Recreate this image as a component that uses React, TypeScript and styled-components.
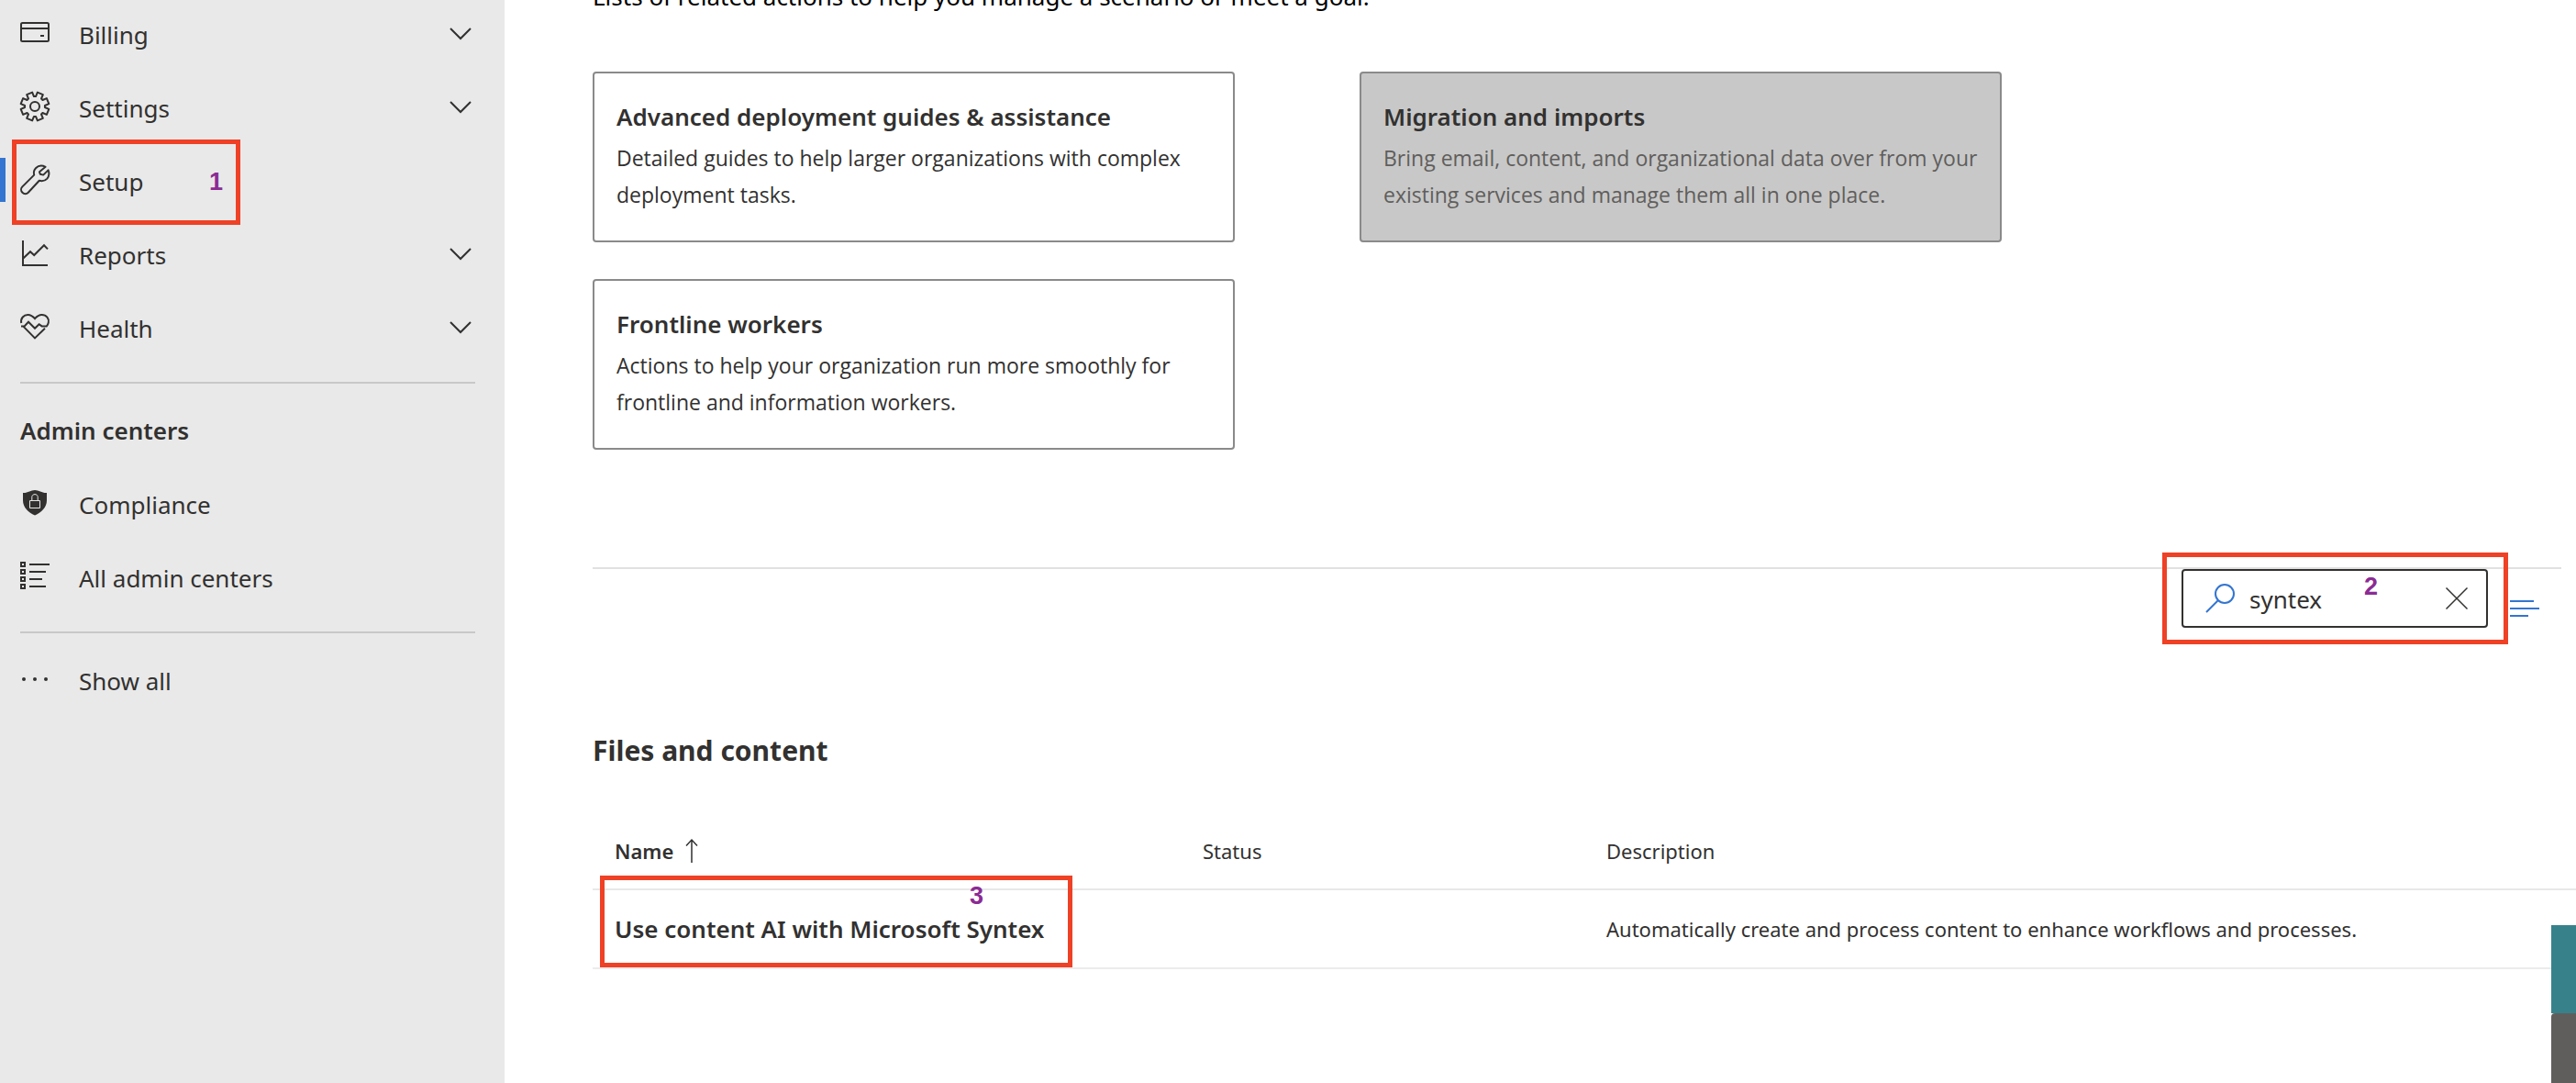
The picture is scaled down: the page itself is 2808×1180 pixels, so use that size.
import React, { useState } from "react";
import styled, { createGlobalStyle, css } from "styled-components";

const color = {
  text: "#323130",
  muted: "#605e5c",
  nav: "#e9e9e9",
  rule: "#c8c8c8",
  cardBorder: "#8a8a8a",
  lineSoft: "#e1e1e1",
  accent: "#3375d0",
  mark: "#ee4126",
  markText: "#8b2b94",
};

const GlobalStyle = createGlobalStyle`
  * { box-sizing: border-box; }
  html, body { margin: 0; }
  body {
    overflow: hidden;
    background: #ffffff;
    color: ${color.text};
    font-family: "Noto Sans", "Open Sans", sans-serif;
    font-size: 26px;
    line-height: 40px;
  }
  button, input { font: inherit; color: inherit; }
  h2, h3, p, ul { margin: 0; padding: 0; }
`;

const Shell = styled.div`
  display: flex;
  height: 100vh;
  overflow: hidden;
`;

const Sidebar = styled.nav`
  flex: 0 0 550px;
  background: ${color.nav};
`;

const NavList = styled.ul`
  list-style: none;
  &:first-child { margin-top: -3px; }
`;

const NavItem = styled.li<{ $selected?: boolean }>`
  position: relative;
  ${(p) =>
    p.$selected &&
    css`
      &::before {
        content: "";
        position: absolute;
        left: 0;
        top: 15px;
        width: 6px;
        height: 48px;
        background: ${color.accent};
      }
    `}
`;

const rowStyle = css`
  display: flex;
  align-items: center;
  width: 100%;
  height: 80px;
  padding: 0 36px 0 22px;
  border: 0;
  background: none;
  color: ${color.text};
  text-align: left;
  text-decoration: none;
  cursor: pointer;
`;

const NavLink = styled.a`${rowStyle}`;
const NavButton = styled.button`${rowStyle}`;

const NavLabel = styled.span`
  flex: 1;
  padding: 2px 0 0 32px;
`;

const NavRule = styled.hr`
  height: 2px;
  margin: 19px 32px 11px 22px;
  border: 0;
  background: ${color.rule};
`;

const NavHeading = styled.h2`
  padding: 20px 22px;
  font-size: 26px;
  font-weight: 600;
`;

const LineIcon = styled.svg<{ $accent?: boolean }>`
  flex: none;
  display: block;
  color: ${(p) => (p.$accent ? color.accent : color.text)};
  fill: none;
  stroke: currentColor;
  stroke-width: 2;
  overflow: visible;
`;

const Main = styled.main`
  flex: 1;
  min-width: 0;
  margin-top: -24px;
  padding-left: 96px;
`;

const Intro = styled.p`
  color: #000000;
`;

const CardGrid = styled.div`
  display: grid;
  grid-template-columns: repeat(2, minmax(0, 700px));
  gap: 40px 136px;
  margin: 62px 16px 0 0;
`;

const Card = styled.button<{ $pressed?: boolean }>`
  padding: 27px 16px 30px 24px;
  border: 2px solid ${color.cardBorder};
  border-radius: 4px;
  background: ${(p) => (p.$pressed ? "#c8c8c8" : "#ffffff")};
  text-align: left;
  cursor: pointer;
`;

const CardTitle = styled.span`
  display: block;
  font-weight: 600;
`;

const CardText = styled.span<{ $pressed?: boolean }>`
  display: block;
  margin-top: 5px;
  color: ${(p) => (p.$pressed ? color.muted : color.text)};
  font-family: "Open Sans", "Noto Sans", sans-serif;
  font-size: 23px;
`;

const Toolbar = styled.div`
  display: flex;
  justify-content: flex-end;
  align-items: center;
  gap: 24px;
  margin: 128px 16px 0 0;
  padding-right: 24px;
  border-top: 2px solid ${color.lineSoft};
`;

const SearchBox = styled.div`
  position: relative;
  display: flex;
  align-items: center;
  width: 334px;
  height: 64px;
  padding: 0 20px 0 24px;
  border: 2px solid ${color.text};
  border-radius: 4px;
  background: #ffffff;
`;

const SearchInput = styled.input`
  flex: 1;
  min-width: 0;
  height: 44px;
  padding: 2px 0 0 16px;
  border: 0;
  outline: 0;
  background: none;
`;

const IconButton = styled.button`
  display: block;
  padding: 0;
  border: 0;
  background: none;
  cursor: pointer;
`;

const Callout = styled.span<{ $inset: string }>`
  position: absolute;
  inset: ${(p) => p.$inset};
  border: 5px solid ${color.mark};
  pointer-events: none;
`;

const CalloutNumber = styled.span<{ $top: number; $left: number }>`
  position: absolute;
  top: ${(p) => p.$top}px;
  left: ${(p) => p.$left}px;
  color: ${color.markText};
  font: bold 27px/26px "Liberation Sans", Arial, sans-serif;
`;

const SectionTitle = styled.h2`
  margin-top: 112px;
  font-size: 30px;
  font-weight: 700;
  line-height: 44px;
`;

const Table = styled.table`
  width: 100%;
  margin-top: 46px;
  border-spacing: 0;
  table-layout: fixed;
`;

const HeadCell = styled.th<{ $width?: number; $sorted?: boolean }>`
  width: ${(p) => (p.$width ? `${p.$width}px` : "auto")};
  height: 84px;
  padding: 0 24px;
  border-bottom: 2px solid #e8e8e8;
  font-size: 22px;
  font-weight: ${(p) => (p.$sorted ? 600 : 400)};
  text-align: left;
`;

const SortButton = styled.button`
  display: flex;
  align-items: center;
  gap: 13px;
  padding: 0;
  border: 0;
  background: none;
  cursor: pointer;
`;

const Cell = styled.td`
  height: 86px;
  padding: 0 24px;
  border-bottom: 2px solid #ececec;
  font-size: 22px;
`;

const RowLink = styled.a`
  position: relative;
  display: block;
  width: fit-content;
  color: ${color.text};
  font-size: 26px;
  font-weight: 600;
  text-decoration: none;
`;

const SideTabs = styled.aside`
  position: fixed;
  top: 1008px;
  right: 0;
  bottom: 0;
  display: flex;
  flex-direction: column;
  width: 27px;
`;

const HelpTab = styled.button`
  height: 96px;
  padding: 0;
  border: 0;
  background: #37828a;
`;

const FeedbackTab = styled.button`
  flex: 1;
  padding: 0;
  border: 0;
  border-radius: 4px 0 0 0;
  background: #605e5c;
`;

function gearPath() {
  const at = (deg: number, r: number) => {
    const a = (deg * Math.PI) / 180;
    return `${(16 + r * Math.sin(a)).toFixed(2)} ${(19 + r * Math.cos(a)).toFixed(2)}`;
  };
  const points: string[] = [];
  for (let i = 0; i < 8; i++) {
    const c = 22.5 + i * 45;
    points.push(at(c - 17, 11), at(c - 12, 15.6), at(c + 12, 15.6), at(c + 17, 11));
  }
  return `M${points.join("L")}Z`;
}

const NavIcon = ({ children }: { children: React.ReactNode }) => (
  <LineIcon width="32" height="40" viewBox="0 0 32 40" aria-hidden="true">
    {children}
  </LineIcon>
);

const icons = {
  billing: (
    <NavIcon>
      <rect x="1" y="8" width="30" height="20" rx="1.5" />
      <path d="M1 14H31M22 22H26" />
    </NavIcon>
  ),
  settings: (
    <NavIcon>
      <path d={gearPath()} strokeLinejoin="round" />
      <circle cx="16" cy="19" r="5" />
    </NavIcon>
  ),
  setup: (
    <NavIcon>
      <path d="M27.6 4.8C24 3 19.8 3.4 17.2 6C15 8.2 14.4 11 15.2 13.6L2.4 26.4C.6 28.2 .6 31 2.4 32.8C4.2 34.6 7 34.6 8.8 32.8L20.8 19.8C24 20.6 27.4 19.8 29.4 17.6C31.6 15 31.8 11.4 30.6 8.4L25.2 13.6L21.8 12.8L21 10.2Z" strokeLinejoin="round" />
    </NavIcon>
  ),
  reports: (
    <NavIcon>
      <path d="M3 5V32H30M3 24.8L11 17.2L15.2 21L26 10.2L30 14.4" />
    </NavIcon>
  ),
  health: (
    <NavIcon>
      <path d="M1.2 15C.2 9.6 4 6 8.4 6C11.6 6 14 7.8 16 10.2C18 7.8 20.4 6 23.6 6C28.6 6 31.8 10.4 30.8 14.6C30.4 16.4 29.8 17.6 28.8 18.4H23.6L20.6 16.2L16 20.8L9 13.8L4.6 18.4H1M3.4 18.6L16 31.4L27 20.8" />
    </NavIcon>
  ),
  compliance: (
    <NavIcon>
      <path d="M3 8C8 8.4 11.6 5 16 5C20.4 5 24 8.4 29 8V16C29 24 23 29.4 16 32.4C9 29.4 3 24 3 16Z" fill="currentColor" stroke="none" />
      <path d="M10.5 16.5H21.5V24.5H10.5ZM12.8 16.5V12.6C12.8 8.6 19.2 8.6 19.2 12.6V16.5" stroke={color.nav} strokeWidth="1" />
    </NavIcon>
  ),
  list: (
    <NavIcon>
      <path d="M1 4H5V8H1ZM1 12H5V16H1ZM1 20H5V24H1ZM1 28H5V32H1ZM10 6H32M10 14H28M10 22H24M10 30H28" />
    </NavIcon>
  ),
  more: (
    <NavIcon>
      <g fill="currentColor" stroke="none">
        <circle cx="4" cy="19" r="2" />
        <circle cx="16" cy="19" r="2" />
        <circle cx="28" cy="19" r="2" />
      </g>
    </NavIcon>
  ),
};

const Chevron = () => (
  <LineIcon width="24" height="40" viewBox="0 0 24 40" aria-hidden="true">
    <path d="M1 14L12 25L23 14" />
  </LineIcon>
);

const Mark = ({ n, inset, top, left }: { n: number; inset: string; top: number; left: number }) => (
  <Callout $inset={inset}>
    <CalloutNumber $top={top} $left={left}>
      {n}
    </CalloutNumber>
  </Callout>
);

const Toggle = ({ icon, label }: { icon: React.ReactNode; label: string }) => (
  <NavItem>
    <NavButton type="button" aria-expanded="false">
      {icon}
      <NavLabel>{label}</NavLabel>
      <Chevron />
    </NavButton>
  </NavItem>
);

const cards = [
  {
    title: "Advanced deployment guides & assistance",
    text: "Detailed guides to help larger organizations with complex deployment tasks.",
  },
  {
    title: "Migration and imports",
    text: "Bring email, content, and organizational data over from your existing services and manage them all in one place.",
    pressed: true,
  },
  {
    title: "Frontline workers",
    text: "Actions to help your organization run more smoothly for frontline and information workers.",
  },
];

export default function App() {
  const [query, setQuery] = useState("syntex");
  return (
    <>
      <GlobalStyle />
      <Shell>
        <Sidebar aria-label="Admin">
          <NavList>
            <Toggle icon={icons.billing} label="Billing" />
            <Toggle icon={icons.settings} label="Settings" />
            <NavItem $selected>
              <NavLink href="#setup" aria-current="page">
                {icons.setup}
                <NavLabel>Setup</NavLabel>
              </NavLink>
              <Mark n={1} inset="-5px 288px -8px 13px" top={28} left={210} />
            </NavItem>
            <Toggle icon={icons.reports} label="Reports" />
            <Toggle icon={icons.health} label="Health" />
          </NavList>
          <NavRule />
          <NavHeading>Admin centers</NavHeading>
          <NavList>
            <NavItem>
              <NavLink href="#compliance">
                {icons.compliance}
                <NavLabel>Compliance</NavLabel>
              </NavLink>
            </NavItem>
            <NavItem>
              <NavLink href="#all">
                {icons.list}
                <NavLabel>All admin centers</NavLabel>
              </NavLink>
            </NavItem>
          </NavList>
          <NavRule />
          <NavButton type="button">
            {icons.more}
            <NavLabel>Show all</NavLabel>
          </NavButton>
        </Sidebar>

        <Main>
          <Intro>Lists of related actions to help you manage a scenario or meet a goal.</Intro>
          <CardGrid>
            {cards.map((c) => (
              <Card key={c.title} type="button" $pressed={c.pressed}>
                <CardTitle>{c.title}</CardTitle>
                <CardText $pressed={c.pressed}>{c.text}</CardText>
              </Card>
            ))}
          </CardGrid>

          <Toolbar>
            <SearchBox>
              <LineIcon $accent width="32" height="40" viewBox="0 0 32 40" aria-hidden="true">
                <circle cx="21" cy="15" r="10" />
                <path d="M14 22L1 35" />
              </LineIcon>
              <SearchInput aria-label="Search" value={query} onChange={(e) => setQuery(e.target.value)} />
              <IconButton type="button" aria-label="Clear search" onClick={() => setQuery("")}>
                <LineIcon width="24" height="24" viewBox="0 0 24 24" aria-hidden="true">
                  <path d="M.5 .5L23.5 23.5M23.5 .5L.5 23.5" strokeWidth="1.5" />
                </LineIcon>
              </IconButton>
              <Mark n={2} inset="-20px -24px -20px -23px" top={19} left={215} />
            </SearchBox>
            <IconButton type="button" aria-label="Group by">
              <LineIcon $accent width="32" height="40" viewBox="0 0 32 40" aria-hidden="true">
                <path d="M0 23H26M0 31H32M0 39H20" />
              </LineIcon>
            </IconButton>
          </Toolbar>

          <SectionTitle>Files and content</SectionTitle>
          <Table>
            <thead>
              <tr>
                <HeadCell $width={641} $sorted scope="col" aria-sort="ascending">
                  <SortButton type="button">
                    Name
                    <LineIcon width="14" height="26" viewBox="0 0 14 26" aria-hidden="true">
                      <path d="M7 26V1M1 7.5L7 1L13 7.5" strokeWidth="1.5" />
                    </LineIcon>
                  </SortButton>
                </HeadCell>
                <HeadCell $width={440} scope="col">Status</HeadCell>
                <HeadCell scope="col">Description</HeadCell>
              </tr>
            </thead>
            <tbody>
              <tr>
                <Cell>
                  <RowLink href="#syntex">
                    Use content AI with Microsoft Syntex
                    <Mark n={3} inset="-38px -31px -22px -16px" top={4} left={398} />
                  </RowLink>
                </Cell>
                <Cell />
                <Cell>Automatically create and process content to enhance workflows and processes.</Cell>
              </tr>
            </tbody>
          </Table>
        </Main>
        <SideTabs>
          <HelpTab type="button" aria-label="Help and support" />
          <FeedbackTab type="button" aria-label="Give feedback" />
        </SideTabs>
      </Shell>
    </>
  );
}
